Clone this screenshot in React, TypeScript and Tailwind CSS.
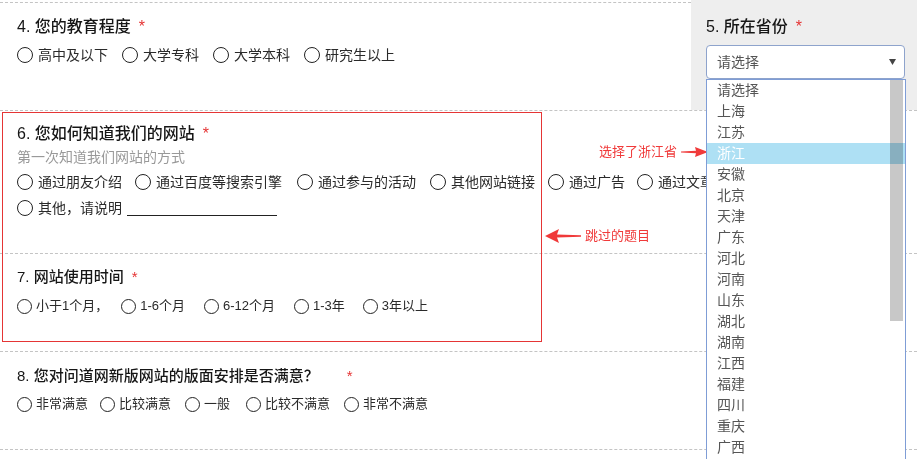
import React from "react";

const FONT = { fontFamily: '"Liberation Sans", "Noto Sans CJK SC", sans-serif' };

function Radio({ label, big = true, mr = 14 }: { label: string; big?: boolean; mr?: number }) {
  return (
    <span className="flex items-center whitespace-nowrap shrink-0" style={{ marginRight: mr }}>
      <span
        className={
          big
            ? "w-[16px] h-[16px] rounded-full border-[1.5px] border-[#222] shrink-0"
            : "w-[15px] h-[15px] rounded-full border-[1.5px] border-[#222] shrink-0"
        }
      />
      <span className={big ? "ml-[5px] text-[14px] text-[#2a2a2a]" : "ml-[4px] text-[13px] text-[#2a2a2a]"}>
        {label}
      </span>
    </span>
  );
}

function Title({ text, big = true, gap = 8 }: { text: string; big?: boolean; gap?: number }) {
  return (
    <div
      className={
        big
          ? "h-[20px] leading-[20px] text-[16px] font-medium text-[#161616] whitespace-nowrap"
          : "h-[20px] leading-[20px] text-[15px] font-medium text-[#161616] whitespace-nowrap"
      }
    >
      {text}
      <span className="text-[#e53333] font-normal" style={{ marginLeft: gap }}>
        *
      </span>
    </div>
  );
}

const provinces = [
  "请选择",
  "上海",
  "江苏",
  "浙江",
  "安徽",
  "北京",
  "天津",
  "广东",
  "河北",
  "河南",
  "山东",
  "湖北",
  "湖南",
  "江西",
  "福建",
  "四川",
  "重庆",
  "广西",
];

export default function App() {
  return (
    <div className="relative w-[917px] h-[459px] overflow-hidden bg-white" style={FONT}>
      {/* Section Q4 + Q5 */}
      <div className="flex h-[111px] border-b border-dashed border-[#c4c4c4]">
        <div className="flex-1 pt-[2px]">
          <div className="border-t border-dashed border-[#c4c4c4] pl-[17px] pt-[14px]">
            <Title text="4. 您的教育程度" />
            <div className="flex items-center h-[20px] mt-[8px]">
              <Radio label="高中及以下" />
              <Radio label="大学专科" />
              <Radio label="大学本科" />
              <Radio label="研究生以上" />
            </div>
          </div>
        </div>
        <div className="w-[226px] bg-[#eeeeee] pt-[17px] pl-[15px]">
          <Title text="5. 所在省份" />
          <div className="mt-[8px] w-[199px] h-[34px] bg-white border border-[#8ea3cc] rounded-[4px] flex items-center justify-between pl-[10px] pr-[8px]">
            <span className="text-[14px] text-[#555]">请选择</span>
            <svg width="7" height="6" viewBox="0 0 7 6">
              <path d="M0 0 L7 0 L3.5 6 Z" fill="#444" />
            </svg>
          </div>
        </div>
      </div>

      {/* Section Q6 */}
      <div className="h-[143px] border-b border-dashed border-[#c4c4c4] pl-[17px] pt-[13px]">
        <Title text="6. 您如何知道我们的网站" />
        <div className="mt-[3px] h-[20px] leading-[20px] text-[14px] text-[#999]">第一次知道我们网站的方式</div>
        <div className="w-[689px] overflow-hidden mt-[5px]">
          <div className="flex items-center h-[20px] whitespace-nowrap">
            <Radio label="通过朋友介绍" mr={13} />
            <Radio label="通过百度等搜索引擎" mr={15} />
            <Radio label="通过参与的活动" mr={14} />
            <Radio label="其他网站链接" mr={13} />
            <Radio label="通过广告" mr={12} />
            <Radio label="通过文章报道" mr={12} />
          </div>
        </div>
        <div className="flex items-center h-[20px] mt-[6px]">
          <span className="flex items-center whitespace-nowrap">
            <span className="w-[16px] h-[16px] rounded-full border-[1.5px] border-[#222] shrink-0" />
            <span className="ml-[5px] text-[14px] text-[#2a2a2a]">其他，请说明</span>
          </span>
          <span className="ml-[5px] mt-[14px] w-[150px] border-b border-[#222]" />
        </div>
      </div>

      {/* Section Q7 */}
      <div className="h-[98px] border-b border-dashed border-[#c4c4c4] pl-[17px] pt-[13px]">
        <Title text="7. 网站使用时间" big={false} gap={8} />
        <div className="flex items-center h-[20px] mt-[9px]">
          <Radio label="小于1个月，" big={false} mr={13} />
          <Radio label="1-6个月" big={false} mr={19} />
          <Radio label="6-12个月" big={false} mr={19} />
          <Radio label="1-3年" big={false} mr={18} />
          <Radio label="3年以上" big={false} mr={14} />
        </div>
      </div>

      {/* Section Q8 */}
      <div className="h-[98px] border-b border-dashed border-[#c4c4c4] pl-[17px] pt-[14px]">
        <Title text="8. 您对问道网新版网站的版面安排是否满意？" big={false} gap={28} />
        <div className="flex items-center h-[20px] mt-[8px]">
          <Radio label="非常满意" big={false} mr={12} />
          <Radio label="比较满意" big={false} mr={14} />
          <Radio label="一般" big={false} mr={16} />
          <Radio label="比较不满意" big={false} mr={14} />
          <Radio label="非常不满意" big={false} mr={13} />
        </div>
      </div>

      {/* Red annotation box */}
      <div className="absolute left-[2px] top-[112px] w-[540px] h-[230px] border border-[#e53535] pointer-events-none" />

      {/* Annotation: skipped questions */}
      <div className="absolute left-[545px] top-[228px] flex items-center">
        <svg width="36" height="16" viewBox="0 0 36 16">
          <path d="M0 8 L14 1 L12 6.5 L36 7.2 L36 8.8 L12 9.5 L14 15 Z" fill="#f03a3a" />
        </svg>
        <span className="ml-[4px] text-[13px] leading-[16px] text-[#f03a3a]">跳过的题目</span>
      </div>

      {/* Annotation: selected Zhejiang */}
      <div className="absolute left-[599px] top-[143px] flex items-center">
        <span className="text-[13px] leading-[18px] text-[#f03a3a]">选择了浙江省</span>
        <svg width="27" height="12" viewBox="0 0 27 12" className="ml-[4px]">
          <path d="M0 5.5 L15 4.8 L14 1 L27 6 L14 11 L15 7.2 L0 6.5 Z" fill="#f03a3a" />
        </svg>
      </div>

      {/* Dropdown list */}
      <div className="absolute left-[706px] top-[79px] w-[200px] h-[390px] bg-white border border-[#7f9dd6] overflow-hidden">
        <div className="flex flex-col">
          {provinces.map((p, i) => (
            <div
              key={p}
              className={
                i === 3
                  ? "h-[21px] leading-[21px] pl-[10px] text-[14px] text-white bg-[#aee0f4]"
                  : "h-[21px] leading-[21px] pl-[10px] text-[14px] text-[#555]"
              }
            >
              {p}
            </div>
          ))}
        </div>
        <div className="absolute right-[2px] top-0 w-[13px] h-[241px] bg-[#c8c8c8] mix-blend-multiply" />
      </div>
    </div>
  );
}
